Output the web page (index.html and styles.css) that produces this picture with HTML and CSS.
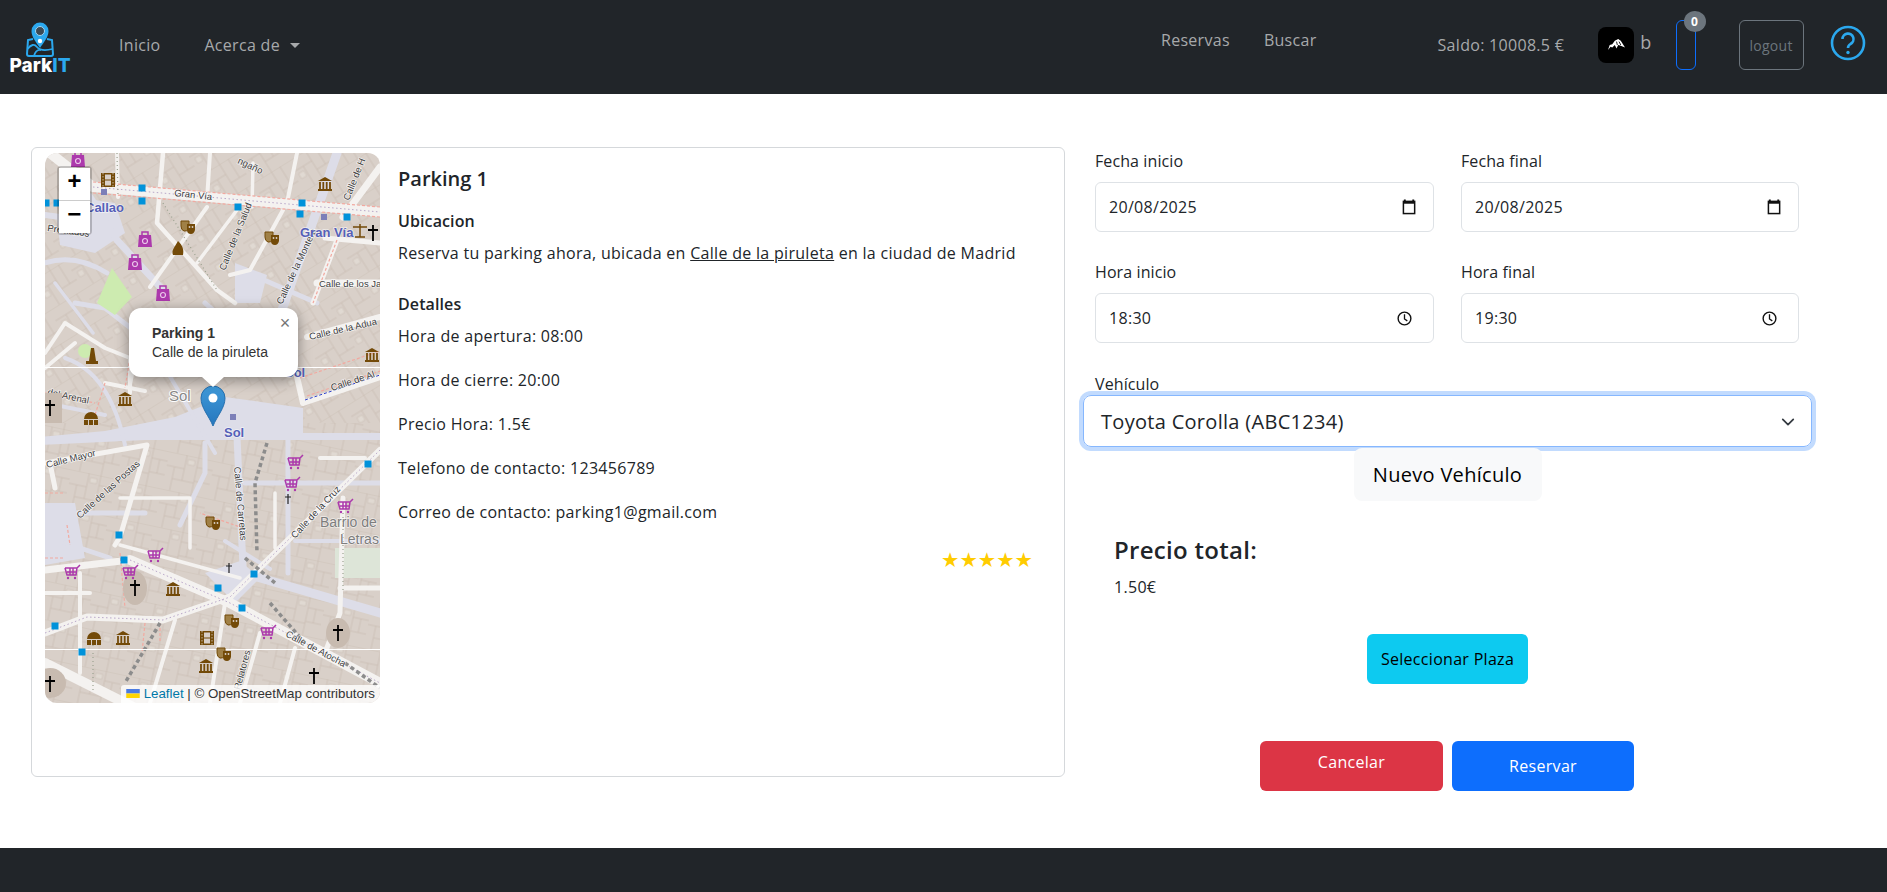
FILE: index.html
```html
<!DOCTYPE html>
<html lang="es">
<head>
  <meta charset="UTF-8">
  <title>ParkIT - Reserva</title>
  <link rel="stylesheet" href="styles.css">
</head>
<body>

<nav class="navbar">
  <a class="brand" href="#">
    <svg class="brand-icon" viewBox="0 0 28 35" width="28" height="35">
      <path d="M7 17 L2 18 L1 32 Q1 34 3 34 L25 34 Q27 34 27 32 L26 18 L21 17" fill="none" stroke="#2ba8ee" stroke-width="2"/>
      <path d="M1.5 27 Q7 20 11 25 T26.500 27 M8 34 Q10 27 15 28" fill="none" stroke="#2ba8ee" stroke-width="1.800"/>
      <path d="M14 26 C10 20 5.500 15 5.500 9 A8.500 8.500 0 0 1 22.500 9 C22.500 15 18 20 14 26 Z" fill="#2ba8ee"/>
      <circle cx="14" cy="9" r="4.500" fill="#3c4a55" stroke="#9fd6f5"/>
      <circle cx="14" cy="19" r="2.200" fill="#fff"/>
    </svg>
    <span class="brand-name">Park<span class="brand-it">IT</span></span>
  </a>
  <a class="nav-link nav-home" href="#">Inicio</a>
  <a class="nav-link nav-about" href="#">Acerca de<span class="caret"></span></a>

  <div class="nav-center">
    <a class="nav-link" href="#">Reservas</a>
    <a class="nav-link" href="#">Buscar</a>
  </div>

  <span class="saldo">Saldo: 10008.5 €</span>
  <span class="avatar">
    <svg viewBox="0 0 20 14" width="17" height="12">
      <path d="M0 13 L2 7 L5 6 L8 2 L12 0 L15 2 L20 10 L15 8 L12 7 L10 11 L8 7 L5 10 L3 9 Z" fill="#fff"/>
      <path d="M10 3 L11 7 M13 3 L15 7" stroke="#000" stroke-width="1"/>
    </svg>
  </span>
  <span class="username">b</span>
  <button class="cart-btn"><span class="cart-badge">0</span></button>
  <button class="logout-btn">logout</button>
  <svg class="help-icon" viewBox="0 0 36 36" width="36" height="36">
    <circle cx="18" cy="18" r="16" fill="none" stroke="#2ba8ee" stroke-width="2.600"/>
    <path d="M12.500 14 A5.500 5.500 0 1 1 20.500 19 Q18 20.500 18 23" fill="none" stroke="#2ba8ee" stroke-width="2.600"/>
    <circle cx="18" cy="27.500" r="1.700" fill="#2ba8ee"/>
  </svg>
</nav>

<main class="content">
  <section class="parking-card">
    <div class="map">
      <svg class="map-tiles" viewBox="0 0 335 550" width="335" height="550">
        <defs>
          <pattern id="blocks" width="46" height="38" patternUnits="userSpaceOnUse" patternTransform="rotate(12)">
            <path d="M0 0 H46 M0 14 H18 M30 10 H46 M18 0 V26 M30 0 V38 M8 14 V38 M8 26 H30 M38 10 V24 M30 24 H46" fill="none" stroke="#c8bcb1" stroke-width="0.700"/>
            <rect x="20" y="4" width="7" height="5" fill="#e0d9d2" stroke="#c8bcb1" stroke-width="0.500"/>
          </pattern>
          <pattern id="blocks-n" width="40" height="34" patternUnits="userSpaceOnUse" patternTransform="rotate(-32)">
            <path d="M0 0 H40 M0 12 H22 M22 0 V34 M12 12 V34 M22 22 H40 M32 0 V22" fill="none" stroke="#c8bcb1" stroke-width="0.700"/>
            <rect x="4" y="16" width="6" height="6" fill="#e0d9d2" stroke="#c8bcb1" stroke-width="0.500"/>
          </pattern>
          <g id="sq"><rect x="-3.500" y="-3.500" width="7" height="7" fill="#0092da"/></g>
          <g id="dsq"><rect x="-3" y="-3" width="6" height="6" fill="#7c7fb8"/></g>
          <g id="bag">
            <path d="M-6 -4 H6 L7 8 H-7 Z" fill="#ac39ac"/>
            <path d="M-3 -4 V-7 H3 V-4" fill="none" stroke="#ac39ac" stroke-width="1.500"/>
            <circle cy="2" r="2.500" fill="none" stroke="#e9c6e9" stroke-width="1.200"/>
          </g>
          <g id="cart">
            <path d="M-7 -4 H5 L8 -7 M-7 -4 L-5 3 H4 L5 -4 M-5 0 H5 M-2 -4 V3 M1 -4 V3" fill="none" stroke="#ac39ac" stroke-width="1.500"/>
            <circle cx="-4" cy="6" r="1.200" fill="#ac39ac"/>
            <circle cx="3" cy="6" r="1.200" fill="#ac39ac"/>
          </g>
          <g id="museum">
            <path d="M-7 -3 L0 -7 L7 -3 Z M-7 5 H7 V7 H-7 Z" fill="#734a08"/>
            <path d="M-5 -2 V5 M-1.700 -2 V5 M1.700 -2 V5 M5 -2 V5" stroke="#734a08" stroke-width="1.800"/>
          </g>
          <g id="house">
            <path d="M-7 1 A7 7 0 0 1 7 1 Z M-7 2 H-3 V7 H-7 Z M3 2 H7 V7 H3 Z M-2 2 H2 V7 H-2 Z" fill="#734a08"/>
          </g>
          <g id="film">
            <rect x="-7" y="-7" width="14" height="14" fill="#734a08"/>
            <rect x="-3" y="-5.500" width="6" height="5" fill="#d9d0c9"/>
            <rect x="-3" y="0.500" width="6" height="5" fill="#d9d0c9"/>
            <path d="M-5 -7 V7 M5 -7 V7" stroke="#d9d0c9" stroke-width="0.800" stroke-dasharray="1.500 1.500"/>
          </g>
          <g id="masks">
            <path d="M-7 -6 H1 V1 Q-1 5 -4 4 Q-7 3 -7 -1 Z" fill="#a08046" stroke="#734a08"/>
            <path d="M-1 -3 H7 V3 Q6 7 3 7 Q-1 7 -1 3 Z" fill="#734a08"/>
            <circle cx="1.500" cy="0" r="0.900" fill="#d9d0c9"/>
            <circle cx="4.500" cy="0" r="0.900" fill="#d9d0c9"/>
          </g>
          <g id="cross"><path d="M0 -8 V8 M-5 -3 H5" stroke="#000" stroke-width="1.800"/></g>
          <g id="cross-s"><path d="M0 -5 V5 M-3 -2 H3" stroke="#222" stroke-width="1.200"/></g>
          <linearGradient id="pin" x1="0" y1="0" x2="0" y2="1">
            <stop offset="0" stop-color="#3f9ad9"/>
            <stop offset="1" stop-color="#2676bd"/>
          </linearGradient>
        </defs>

        <rect width="335" height="550" fill="#d9d0c9"/>
        <rect width="335" height="270" fill="url(#blocks-n)"/>
        <rect y="270" width="335" height="280" fill="url(#blocks)"/>

        <!-- plazas and back streets -->
        <g fill="#dddde8">
          <path d="M30 44 L70 50 L80 80 L50 100 L15 92 L12 66 Z"/>
          <path d="M-5 292 L100 287 L335 287 L335 280 L258 280 L258 255 L180 244 L130 264 L60 278 L-5 284 Z"/>
          <path d="M-5 350 L30 350 L40 405 L0 412 L-5 412 Z"/>
          <path d="M160 420 L195 408 L215 425 L190 450 Z"/>
          <path d="M190 110 L222 122 L215 150 L190 150 Z"/>
        </g>
        <g fill="none" stroke="#dddde8" stroke-linecap="round">
          <path d="M45 44 L72 87 L118 137" stroke-width="7"/>
          <path d="M292 0 L238 154 L225 190" stroke-width="9"/>
          <path d="M0 62 L45 68" stroke-width="6"/>
          <path d="M0 110 Q30 100 62 120" stroke-width="5"/>
          <path d="M105 190 L60 155 L30 150 M90 180 L120 215" stroke-width="5"/>
          <path d="M192 284 L198 414" stroke-width="7"/>
          <path d="M212 424 L335 460" stroke-width="9"/>
          <path d="M243 284 V420" stroke-width="5"/>
          <path d="M200 330 H335" stroke-width="5"/>
          <path d="M160 290 V320 L135 372" stroke-width="5"/>
          <path d="M0 360 H100 M20 390 L65 405" stroke-width="5"/>
          <path d="M212 124 L272 150 M160 150 L205 190" stroke-width="5"/>
          <path d="M250 388 H335 M225 416 L180 388" stroke-width="4"/>
          <path d="M80 292 Q65 220 20 205" stroke-width="4"/>
          <path d="M120 215 L170 300 M0 250 L60 262" stroke-width="4"/>
          <path d="M10 130 L48 180 M210 190 L250 205" stroke-width="3.500"/>
        </g>

        <!-- green patches -->
        <path d="M67 115 L87 144 L70 162 L52 150 Z" fill="#cdebb0"/>
        <circle cx="40" cy="198" r="7" fill="#cdebb0"/>
        <rect x="290" y="395" width="45" height="30" fill="#dde5d8"/>

        <!-- white streets -->
        <g fill="none" stroke="#f4f2f0" stroke-linecap="round" stroke-linejoin="round">
          <path d="M5 0 L48 34 L335 59" stroke-width="10"/>
          <path d="M72 0 L73 44" stroke-width="4"/>
          <path d="M118 0 L112 70 L172 137 L190 150" stroke-width="4.500"/>
          <path d="M165 0 L162 47" stroke-width="4"/>
          <path d="M208 10 L207 54" stroke-width="3.500"/>
          <path d="M252 0 L242 50" stroke-width="4"/>
          <path d="M238 57 L205 117 L185 122" stroke-width="4"/>
          <path d="M162 54 L105 134" stroke-width="4"/>
          <path d="M192 57 L152 110" stroke-width="3.500"/>
          <path d="M335 14 L298 64" stroke-width="7"/>
          <path d="M292 87 L268 150" stroke-width="5"/>
          <path d="M335 90 L280 85" stroke-width="5"/>
          <path d="M272 130 H335" stroke-width="7"/>
          <path d="M262 184 L335 164" stroke-width="6"/>
          <path d="M258 250 L335 224 M258 250 L250 215" stroke-width="6"/>
          <path d="M0 200 L20 170 L60 195 L85 205 L85 240 M0 215 L30 190" stroke-width="4"/>
          <path d="M60 230 L100 238 M90 205 L85 232" stroke-width="4"/>
          <path d="M0 310 L102 292 L75 384 L70 392" stroke-width="5"/>
          <path d="M5 310 L10 335" stroke-width="5"/>
          <path d="M335 297 L185 444" stroke-width="6"/>
          <path d="M85 407 L185 450 L335 530" stroke-width="10"/>
          <path d="M0 417 L85 407" stroke-width="7"/>
          <path d="M0 480 L42 464 L118 467 L185 444" stroke-width="7"/>
          <path d="M0 440 H45 M35 420 V520" stroke-width="4"/>
          <path d="M0 510 L90 555" stroke-width="10"/>
          <path d="M130 467 L105 550 M180 450 L165 550 M215 480 L195 550 M250 495 L235 550" stroke-width="4"/>
          <path d="M298 345 L295 460 L280 500 M295 435 H335" stroke-width="5"/>
          <path d="M75 345 H145 L145 395" stroke-width="3.500"/>
          <path d="M75 392 L195 425 M230 340 V395" stroke-width="3.500"/>
          <path d="M275 305 H320" stroke-width="4"/>
        </g>

        <!-- sidewalk dashes -->
        <g fill="none" stroke="#f2a9a0" stroke-dasharray="3 2" stroke-width="1.200">
          <path d="M48 29 L335 54 M48 40 L335 64"/>
          <path d="M292 87 L268 150"/>
          <path d="M255 225 L335 198 M262 243 L335 218"/>
          <path d="M198 375 L155 360 M75 400 L80 455"/>
          <path d="M0 240 L50 250 M85 205 L80 235 M60 230 L50 262"/>
          <path d="M0 340 H20 M22 372 L25 392 M0 405 H20"/>
          <path d="M100 470 L97 500 M115 470 L115 490"/>
        </g>
        <g fill="none" stroke="#b8a6c8" stroke-dasharray="1.500 2.500" stroke-width="1">
          <path d="M48 34 L335 59"/>
          <path d="M335 297 L185 444"/>
          <path d="M85 407 L185 450 L335 530"/>
          <path d="M0 480 L42 464 L118 467 L185 444"/>
        </g>
        <path d="M260 247 L335 222" fill="none" stroke="#3344cc" stroke-width="1" stroke-dasharray="3 2"/>
        <g fill="none" stroke="#9aa18f" stroke-dasharray="1 3" stroke-width="1.200">
          <path d="M72 0 L73 44 M118 50 L172 137"/>
          <path d="M298 360 V440 M48 480 V540"/>
        </g>
        <g fill="none" stroke="#8c8c8c" stroke-width="3.500" stroke-dasharray="4 3">
          <path d="M222 290 L210 330 L212 400"/>
          <path d="M200 405 L230 430"/>
          <path d="M225 450 L260 490 M300 510 L335 535"/>
          <path d="M115 470 L80 530"/>
        </g>

        <!-- tile seams -->
        <rect y="214" width="335" height="1" fill="#fff"/>
        <rect y="496" width="335" height="1" fill="#fff"/>

        <!-- street names -->
        <g class="map-street">
          <text transform="translate(129 43) rotate(6)">Gran Vía</text>
          <text transform="translate(180 118) rotate(-68)">Calle de la Salud</text>
          <text transform="translate(237 152) rotate(-65)">Calle de la Montera</text>
          <text transform="translate(304 48) rotate(-68)">Calle de H</text>
          <text x="274" y="134">Calle de los Ja</text>
          <text transform="translate(265 187) rotate(-13)">Calle de la Adua</text>
          <text transform="translate(287 238) rotate(-18)">Calle de Al</text>
          <text transform="translate(2 315) rotate(-14)">Calle Mayor</text>
          <text transform="translate(35 366) rotate(-42)">Calle de las Postas</text>
          <text transform="translate(189 314) rotate(85)">Calle de Carretas</text>
          <text transform="translate(250 386) rotate(-47)">Calle de la Cruz</text>
          <text transform="translate(240 483) rotate(28)">Calle de Atocha</text>
          <text transform="translate(193 545) rotate(-75)">e Relatores</text>
          <text transform="translate(2 242) rotate(12)">del Arenal</text>
          <text transform="translate(2 78) rotate(8)">Preciados</text>
          <text transform="translate(192 10) rotate(25)">ngaño</text>
        </g>
        <g class="map-station">
          <text x="40" y="59">Callao</text>
          <text x="255" y="84">Gran Vía</text>
          <text x="240" y="224">Sol</text>
          <text x="179" y="284">Sol</text>
        </g>
        <g class="map-area">
          <text x="275" y="374">Barrio de</text>
          <text x="295" y="391">Letras</text>
        </g>
        <text class="map-metro" x="124" y="248">Sol</text>

        <!-- points of interest -->
        <use href="#bag" x="33" y="6"/><use href="#bag" x="100" y="86"/><use href="#bag" x="90" y="109"/><use href="#bag" x="118" y="140"/>
        <use href="#film" x="63" y="27"/><use href="#film" x="162" y="485"/>
        <use href="#museum" x="280" y="31"/><use href="#museum" x="327" y="202"/><use href="#museum" x="80" y="246"/><use href="#museum" x="128" y="436"/><use href="#museum" x="78" y="485"/><use href="#museum" x="161" y="513"/>
        <use href="#house" x="46" y="265"/><use href="#house" x="49" y="485"/>
        <use href="#masks" x="143" y="74"/><use href="#masks" x="227" y="85"/><use href="#masks" x="168" y="370"/><use href="#masks" x="187" y="468"/><use href="#masks" x="179" y="501"/>
        <path d="M133 88 C138 93 139 97 138 102 L128 102 C126 97 130 94 133 88 Z" fill="#734a08"/>
        <path d="M315 71 V84 M308 74 H322 M310 84 H320" stroke="#734a08" stroke-width="1.500" fill="none"/>
        <path d="M44 208 L46 195 H49 L51 208 H53 V211 H41 V208 Z" fill="#734a08"/>
        <use href="#sq" x="97" y="35"/><use href="#sq" x="97" y="48"/><use href="#sq" x="1" y="50"/><use href="#sq" x="12" y="50"/><use href="#sq" x="193" y="54"/><use href="#sq" x="257" y="50"/><use href="#sq" x="255" y="61"/><use href="#sq" x="302" y="64"/>
        <use href="#sq" x="323" y="311"/><use href="#sq" x="74" y="382"/><use href="#sq" x="79" y="407"/><use href="#sq" x="209" y="421"/><use href="#sq" x="173" y="435"/><use href="#sq" x="197" y="455"/><use href="#sq" x="10" y="473"/><use href="#sq" x="37" y="499"/><use href="#sq" x="13" y="524"/>
        <use href="#dsq" x="59" y="39"/><use href="#dsq" x="279" y="64"/><use href="#dsq" x="188" y="264"/>
        <ellipse cx="90" cy="435" rx="12" ry="17" fill="#c8bbb0"/><ellipse cx="293" cy="480" rx="12" ry="15" fill="#c8bbb0"/>
        <ellipse cx="5" cy="530" rx="16" ry="15" fill="#c8bbb0"/><rect x="-5" y="240" width="22" height="30" fill="#c8bbb0"/>
        <use href="#cross" x="328" y="80"/><use href="#cross" x="5" y="255"/><use href="#cross" x="90" y="435"/><use href="#cross" x="293" y="480"/><use href="#cross" x="269" y="523"/><use href="#cross" x="5" y="531"/>
        <use href="#cross-s" x="184" y="415"/><use href="#cross-s" x="243" y="346"/>
        <use href="#cart" x="250" y="309"/><use href="#cart" x="247" y="331"/><use href="#cart" x="300" y="353"/><use href="#cart" x="110" y="402"/><use href="#cart" x="27" y="419"/><use href="#cart" x="85" y="419"/><use href="#cart" x="223" y="479"/>
      </svg>

      <div class="zoom-control">
        <a class="zoom-btn zoom-in" href="#">+</a>
        <a class="zoom-btn" href="#">−</a>
      </div>

      <svg class="marker" viewBox="0 0 26 42" width="26" height="42">
        <path d="M13 41 C9 31 1 23 1 13 A12 12 0 0 1 25 13 C25 23 17 31 13 41 Z" fill="url(#pin)" stroke="#256fae"/>
        <circle cx="13" cy="13" r="4.500" fill="#fff"/>
      </svg>

      <div class="popup">
        <span class="popup-close">×</span>
        <b class="popup-title">Parking 1</b>
        <span>Calle de la piruleta</span>
      </div>

      <div class="attribution">
        <svg viewBox="0 0 12 8" width="14" height="9"><rect width="12" height="4" fill="#4c7be1"/><rect y="4" width="12" height="4" fill="#ffd500"/></svg>
        <a href="#">Leaflet</a> | © OpenStreetMap contributors
      </div>
    </div>

    <div class="parking-info">
      <h5>Parking 1</h5>
      <h6>Ubicacion</h6>
      <p class="address">Reserva tu parking ahora, ubicada en <a href="#">Calle de la piruleta</a> en la ciudad de Madrid</p>
      <h6>Detalles</h6>
      <p>Hora de apertura: 08:00</p>
      <p>Hora de cierre: 20:00</p>
      <p>Precio Hora: 1.5€</p>
      <p>Telefono de contacto: 123456789</p>
      <p>Correo de contacto: parking1@gmail.com</p>
      <div class="stars">★★★★★</div>
    </div>
  </section>

  <section class="booking">
    <div class="date-grid">
      <div>
        <label>Fecha inicio</label>
        <div class="field"><span>20/08/2025</span>
          <svg viewBox="0 0 16 16" width="15" height="16"><path d="M3 0 V2 M12 0 V2" stroke="#111" stroke-width="2"/><rect x="1.500" y="2" width="12" height="13" fill="none" stroke="#111" stroke-width="1.600"/><rect x="1.500" y="2" width="12" height="2.500" fill="#111"/></svg>
        </div>
      </div>
      <div>
        <label>Fecha final</label>
        <div class="field"><span>20/08/2025</span>
          <svg viewBox="0 0 16 16" width="15" height="16"><path d="M3 0 V2 M12 0 V2" stroke="#111" stroke-width="2"/><rect x="1.500" y="2" width="12" height="13" fill="none" stroke="#111" stroke-width="1.600"/><rect x="1.500" y="2" width="12" height="2.500" fill="#111"/></svg>
        </div>
      </div>
      <div>
        <label>Hora inicio</label>
        <div class="field field-time"><span>18:30</span>
          <svg viewBox="0 0 16 16" width="15" height="15"><circle cx="8" cy="8" r="6.800" fill="none" stroke="#111" stroke-width="1.500"/><path d="M8 3.500 V8.500 L11 10.500" fill="none" stroke="#111" stroke-width="1.400"/></svg>
        </div>
      </div>
      <div>
        <label>Hora final</label>
        <div class="field field-time"><span>19:30</span>
          <svg viewBox="0 0 16 16" width="15" height="15"><circle cx="8" cy="8" r="6.800" fill="none" stroke="#111" stroke-width="1.500"/><path d="M8 3.500 V8.500 L11 10.500" fill="none" stroke="#111" stroke-width="1.400"/></svg>
        </div>
      </div>
    </div>

    <label class="vehicle-label">Vehículo</label>
    <div class="vehicle-select">
      <span>Toyota Corolla (ABC1234)</span>
      <svg viewBox="0 0 16 16" width="14" height="14"><path d="M2 5 L8 11 L14 5" fill="none" stroke="#343a40" stroke-width="2" stroke-linecap="round" stroke-linejoin="round"/></svg>
    </div>
    <div class="new-vehicle-row"><button class="new-vehicle">Nuevo Vehículo</button></div>

    <div class="total">
      <h4>Precio total:</h4>
      <p>1.50€</p>
    </div>

    <div class="plaza-row"><button class="btn btn-plaza">Seleccionar Plaza</button></div>

    <div class="action-row">
      <button class="btn btn-cancel">Cancelar</button>
      <button class="btn btn-reserve">Reservar</button>
    </div>
  </section>
</main>

<footer class="footer"></footer>

</body>
</html>
```

FILE: styles.css
```css
* {
  box-sizing: border-box;
}
body {
  font-family: "Open Sans", Roboto, sans-serif;
  font-size: 16px;
  line-height: 24px;
  letter-spacing: 0.3px;
  color: #212529;
  background: white;
  margin: 0;
  height: 892px;
  display: flex;
  flex-direction: column;
  overflow: hidden;
}
a {
  color: inherit;
}
button {
  letter-spacing: 0.3px;
}

/* navbar */
.navbar {
  height: 94px;
  padding-bottom: 4px;
  background: #212529;
  display: flex;
  align-items: center;
  flex-shrink: 0;
  color: #a7a9ab;
}
.brand {
  width: 72px;
  margin-left: 4px;
  margin-top: 6px;
  display: flex;
  flex-direction: column;
  align-items: center;
  text-decoration: none;
  letter-spacing: 0;
}
.brand-icon {
  display: block;
}
.brand-name {
  font-family: Inter, sans-serif;
  font-weight: 800;
  font-size: 19px;
  line-height: 18px;
  color: white;
}
.brand-it {
  color: #2ba8ee;
}
.nav-link {
  text-decoration: none;
  color: #a7a9ab;
}
.nav-home {
  margin-left: 43px;
}
.nav-about {
  margin-left: 44px;
}
.caret {
  display: inline-block;
  margin-left: 10px;
  vertical-align: 3px;
  border-top: 5px solid #a7a9ab;
  border-left: 5px solid transparent;
  border-right: 5px solid transparent;
}
.nav-center {
  margin-left: 861px;
  margin-top: -10px;
  display: flex;
  gap: 34px;
}
.saldo {
  margin-left: 121px;
}
.avatar {
  margin-left: 34px;
  width: 36px;
  height: 36px;
  background: #000;
  border-radius: 8px;
  display: flex;
  align-items: center;
  justify-content: center;
}
.username {
  margin-left: 6px;
  margin-top: -6px;
  font-size: 18px;
}
.cart-btn {
  position: relative;
  margin-left: 24px;
  width: 20px;
  height: 50px;
  padding: 0;
  background: transparent;
  border: 1px solid #0d6efd;
  border-radius: 6px;
}
.cart-badge {
  position: absolute;
  top: -10px;
  left: 7px;
  width: 22px;
  height: 21px;
  border-radius: 50%;
  background: #6c757d;
  color: white;
  font: bold 12px/21px "Open Sans", sans-serif;
  text-align: center;
}
.logout-btn {
  margin-left: 43px;
  width: 65px;
  height: 50px;
  padding: 0;
  font: 14px "Open Sans", sans-serif;
  color: #6c757d;
  background: transparent;
  border: 1px solid #6c757d;
  border-radius: 6px;
}
.help-icon {
  margin-left: 26px;
  margin-top: -4px;
}

/* main area */
.content {
  flex: 1;
  display: flex;
  align-items: flex-start;
}
.parking-card {
  margin: 53px 0 0 31px;
  width: 1034px;
  height: 630px;
  padding: 5px 13px;
  border: 1px solid #d5d8db;
  border-radius: 6px;
  display: flex;
}
.parking-info {
  flex: 1;
  padding: 14px 28px 0 18px;
}
.parking-info h5 {
  margin: 0 0 21px;
  font-size: 20px;
  line-height: 24px;
  font-weight: 600;
  letter-spacing: 0;
}
.parking-info h6 {
  margin: 0 0 10px;
  font-size: 16px;
  line-height: 19px;
  font-weight: 600;
  letter-spacing: 0.100px;
}
.parking-info p {
  margin: 0 0 20px;
}
.parking-info .address {
  margin-bottom: 30px;
}
.stars {
  text-align: right;
  color: #ffcc00;
  font-family: "DejaVu Sans", sans-serif;
  font-size: 20.500px;
  line-height: 22px;
  letter-spacing: 0;
  margin: 25px -10px 0 0;
}

/* map */
.map {
  position: relative;
  width: 335px;
  height: 550px;
  border-radius: 12px;
  overflow: hidden;
  flex-shrink: 0;
  font-family: "Liberation Sans", Arial, sans-serif;
  letter-spacing: 0;
}
.map-tiles {
  display: block;
}
.map-street text {
  font-size: 9.500px;
  fill: #3d3d3d;
  paint-order: stroke;
  stroke: #ffffff;
  stroke-opacity: 0.7;
  stroke-width: 1.500px;
}
.map-station text {
  font-size: 13px;
  font-weight: bold;
  fill: #5560b8;
  paint-order: stroke;
  stroke: #ffffff;
  stroke-opacity: 0.6;
  stroke-width: 1.500px;
}
.map-area text {
  font-size: 14px;
  fill: #7d7d7d;
  paint-order: stroke;
  stroke: #ffffff;
  stroke-opacity: 0.6;
  stroke-width: 1.500px;
}
.map-metro {
  font-size: 15px;
  fill: #888;
  paint-order: stroke;
  stroke: #ffffff;
  stroke-width: 2px;
}
.zoom-control {
  position: absolute;
  top: 13px;
  left: 12px;
  width: 35px;
  border: 2px solid rgba(0,0,0,0.2);
  border-radius: 4px;
  background-clip: padding-box;
}
.zoom-btn {
  display: block;
  height: 32px;
  background: white;
  color: black;
  text-align: center;
  text-decoration: none;
  font: bold 24px/30px "Liberation Mono", monospace;
}
.zoom-in {
  border-bottom: 1px solid #ccc;
  height: 33px;
}
.marker {
  position: absolute;
  left: 155px;
  top: 232px;
}
.popup {
  position: absolute;
  left: 84px;
  top: 155px;
  width: 169px;
  height: 69px;
  padding: 16px 0 0 23px;
  background: white;
  border-radius: 12px;
  box-shadow: 0 3px 14px rgba(0,0,0,0.4);
  color: #333;
  font-size: 14px;
  line-height: 19px;
  display: flex;
  flex-direction: column;
}
.popup::after {
  content: "";
  position: absolute;
  left: 73px;
  bottom: -10px;
  border-top: 10px solid white;
  border-left: 11px solid transparent;
  border-right: 11px solid transparent;
}
.popup-close {
  position: absolute;
  top: 3px;
  right: 5px;
  width: 16px;
  text-align: center;
  color: #757575;
  font-size: 18px;
  line-height: 24px;
}
.popup-title {
  font-weight: bold;
}
.attribution {
  position: absolute;
  right: 0;
  bottom: 0;
  height: 18px;
  padding: 0 5px;
  background: rgba(255,255,255,0.8);
  color: #333;
  font-size: 13.300px;
  line-height: 18px;
  white-space: nowrap;
  border-top-left-radius: 3px;
}
.attribution a {
  color: #0078A8;
  text-decoration: none;
}

/* booking form */
.booking {
  width: 704px;
  margin-left: 30px;
  padding-top: 56px;
}
.date-grid {
  display: grid;
  grid-template-columns: 339px 338px;
  column-gap: 27px;
  row-gap: 29px;
}
.date-grid label {
  display: block;
  margin: -1px 0 9px;
  letter-spacing: 0.100px;
}
.field {
  height: 50px;
  padding: 0 16px 0 13px;
  border: 1px solid #dee2e6;
  border-radius: 6px;
  display: flex;
  align-items: center;
  justify-content: space-between;
}
.field-time {
  padding-right: 21px;
}
.vehicle-label {
  display: block;
  margin-top: 29px;
  line-height: 24px;
  letter-spacing: 0.100px;
}
.vehicle-select {
  margin: -1px 0 0 -12px;
  width: 729px;
  height: 52px;
  padding: 1px 16px 0 17px;
  border: 1px solid #86b7fe;
  border-radius: 8px;
  box-shadow: 0 0 0 4px rgba(13,110,253,0.25);
  font-size: 20px;
  display: flex;
  align-items: center;
  justify-content: space-between;
}
.new-vehicle-row {
  display: flex;
  justify-content: center;
  width: 729px;
  margin-left: -12px;
  position: relative;
}
.new-vehicle {
  width: 188px;
  height: 53px;
  margin-top: 1px;
  font: 20px "Open Sans", sans-serif;
  color: black;
  background: #f8f9fa;
  border: 0;
  border-radius: 8px;
}
.total {
  margin: 34px 0 0 19px;
}
.total h4 {
  margin: 0 0 11px;
  font-size: 24px;
  line-height: 29px;
  font-weight: 600;
}
.total p {
  margin: 0;
}
.plaza-row {
  display: flex;
  justify-content: center;
  width: 729px;
  margin: 35px 0 0 -12px;
}
.btn {
  height: 50px;
  padding: 0;
  border: 0;
  border-radius: 6px;
  font: 16px "Open Sans", sans-serif;
}
.btn-plaza {
  width: 161px;
  background: #0dcaf0;
  color: black;
}
.action-row {
  display: flex;
  gap: 9px;
  margin: 57px 0 0 165px;
}
.btn-cancel {
  width: 183px;
  background: #dc3545;
  color: white;
  padding-bottom: 8px;
}
.btn-reserve {
  width: 182px;
  background: #0d6efd;
  color: white;
}

.footer {
  height: 44px;
  background: #212529;
  flex-shrink: 0;
}
```
